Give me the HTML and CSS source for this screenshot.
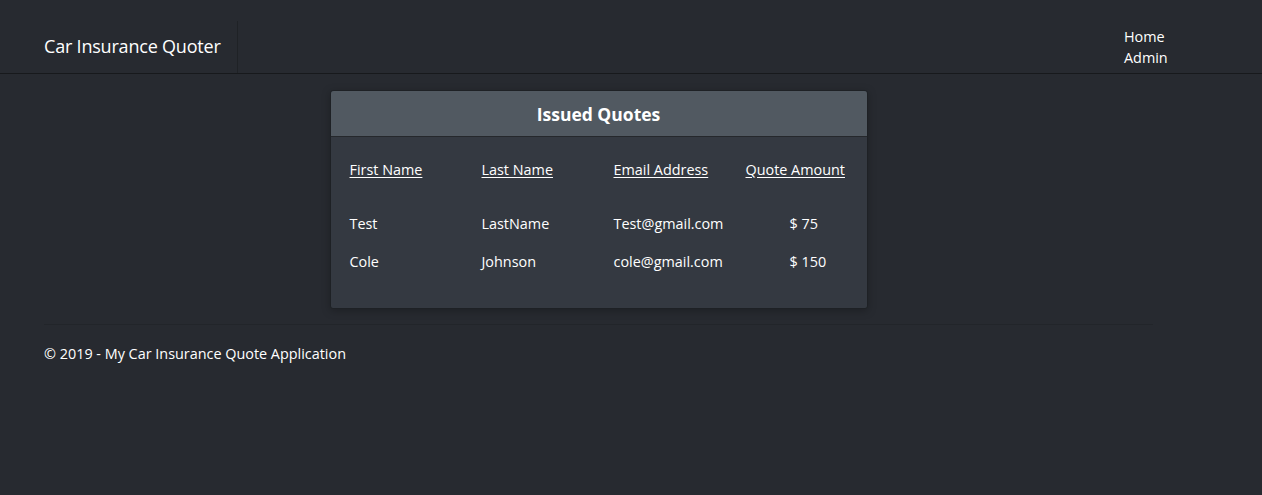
FILE: index.html
```html
<!DOCTYPE html>
<html lang="en">
<head>
<meta charset="utf-8">
<title>Car Insurance Quoter</title>
<link rel="stylesheet" href="styles.css">
</head>
<body>
<header class="navbar">
  <div class="brand-wrap"><a class="brand" href="#">Car Insurance Quoter</a></div>
  <nav class="nav-links">
    <a href="#">Home</a>
    <a href="#">Admin</a>
  </nav>
</header>
<main class="container">
  <section class="card">
    <div class="card-header">Issued Quotes</div>
    <div class="card-body">
      <table class="quotes">
        <thead>
          <tr><th><a href="#">First Name</a></th><th><a href="#">Last Name</a></th><th><a href="#">Email Address</a></th><th><a href="#">Quote Amount</a></th></tr>
        </thead>
        <tbody>
          <tr><td>Test</td><td>LastName</td><td>Test@gmail.com</td><td class="amt">$ 75</td></tr>
          <tr><td>Cole</td><td>Johnson</td><td>cole@gmail.com</td><td class="amt">$ 150</td></tr>
        </tbody>
      </table>
    </div>
  </section>
  <footer class="footer">
    <p>&copy; 2019 - My Car Insurance Quote Application</p>
  </footer>
</main>
</body>
</html>
```
FILE: styles.css
```css
* { box-sizing: border-box; }
html, body { margin: 0; padding: 0; }
body {
  background: #272a30;
  color: #ffffff;
  font-family: "Open Sans", "Noto Sans", sans-serif;
  font-size: 14.4px;
  height: 495px;
}
a { color: #ffffff; }
.navbar {
  display: flex;
  justify-content: space-between;
  align-items: stretch;
  height: 74px;
  padding: 21px 0 0 44px;
  border-bottom: 1px solid #17191c;
}
.brand-wrap {
  display: flex;
  align-items: center;
  padding-right: 16px;
  border-right: 1px solid #1f2226;
  padding-bottom: 2px;
}
.brand {
  font-size: 18px;
  text-decoration: none;
  letter-spacing: -0.2px;
}
.nav-links {
  display: flex;
  flex-direction: column;
  width: 138px;
  margin-top: 5px;
}
.nav-links a {
  text-decoration: none;
  font-size: 14.4px;
  line-height: 21px;
}
.container {
  width: 1109px;
  margin-left: 44px;
  padding-top: 16px;
}
.card {
  width: 538px;
  margin: 0 auto;
  background: #343941;
  border: 1px solid #1e2125;
  border-radius: 3px;
  box-shadow: 0 2px 8px rgba(0,0,0,0.25);
}
.card-header {
  background: #515961;
  height: 46px;
  border-bottom: 1px solid #25282c;
  border-radius: 3px 3px 0 0;
  display: flex;
  align-items: center;
  justify-content: center;
  font-weight: 700;
  font-size: 17.5px;
}
.card-body {
  padding: 18px 19px 28px 19px;
}
.quotes {
  border-collapse: collapse;
  width: 528px;
}
.quotes th, .quotes td {
  width: 132px;
  text-align: left;
  padding: 0;
  font-weight: 400;
  font-size: 14.4px;
  white-space: nowrap;
}
.quotes th { height: 28px; vertical-align: middle; }
.quotes th a { text-decoration: underline; text-underline-offset: 2px; }
.quotes td { height: 38px; vertical-align: middle; }
.quotes tbody tr:first-child td { padding-top: 21px; height: 59px; }
.quotes td.amt { padding-left: 44px; }
.footer {
  margin-top: 15px;
  border-top: 1px solid #22252a;
}
.footer p {
  margin: 0;
  padding-top: 19px;
  font-size: 14.4px;
}
```
